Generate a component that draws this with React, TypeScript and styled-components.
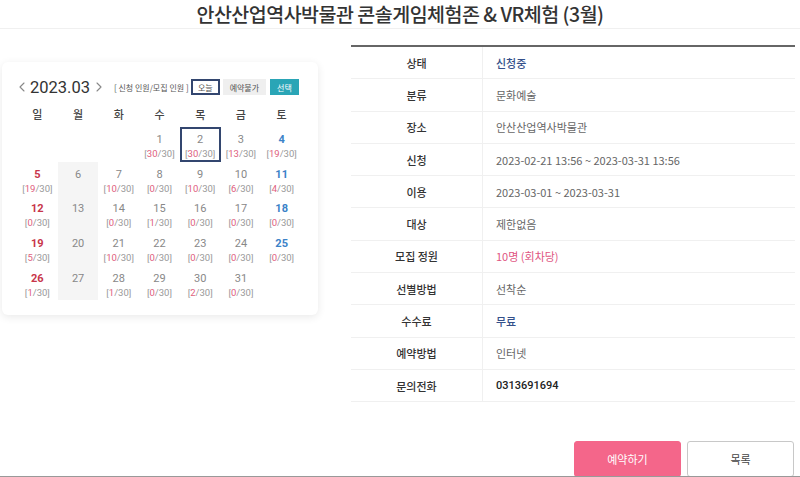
import React from "react";
import styled, { createGlobalStyle } from "styled-components";
import { ChevronLeft, ChevronRight } from "lucide-react";

const GlobalStyle = createGlobalStyle`
  body {
    margin: 0;
    background: #fff;
    font-family: "Noto Sans CJK KR", "Noto Sans", Roboto, sans-serif;
    color: #333;
  }
`;

const Page = styled.div`
  width: 800px;
  height: 477px;
  overflow: hidden;
  display: flex;
  flex-direction: column;
`;

const Title = styled.h1`
  margin: 0;
  height: 29px;
  border-bottom: 1px solid #f0f0f0;
  box-sizing: border-box;
  font-size: 19.5px;
  font-weight: 500;
  line-height: 28px;
  text-align: center;
  color: #333;
  letter-spacing: -0.5px;
`;

const Main = styled.div`
  display: flex;
  align-items: flex-start;
`;

const Card = styled.div`
  margin: 33px 0 0 2px;
  width: 316px;
  box-sizing: border-box;
  padding: 14px 16px 15px 15px;
  background: #fff;
  border-radius: 6px;
  box-shadow: 0 2px 8px rgba(0, 0, 0, 0.09);
`;

const CalHeader = styled.div`
  display: flex;
  align-items: center;
  height: 22px;
  margin-bottom: 3px;
`;

const NavButton = styled.span`
  display: inline-flex;
  align-items: center;
  color: #888;
  margin: 0 -3px;
`;

const Month = styled.span`
  font-family: Roboto, "Noto Sans", sans-serif;
  font-size: 16.5px;
  color: #333;
  margin: 0 4px 0 3px;
`;

const Legend = styled.span`
  font-size: 8px;
  color: #555;
  margin-left: 10px;
  margin-right: 2px;
  white-space: nowrap;
`;

const Chip = styled.span<{ $kind: "today" | "closed" | "selected" }>`
  display: inline-flex;
  align-items: center;
  justify-content: center;
  height: 16px;
  box-sizing: border-box;
  font-size: 8px;
  white-space: nowrap;
  color: ${({ $kind }) => ($kind === "selected" ? "#fff" : "#555")};
  background: ${({ $kind }) =>
    $kind === "closed" ? "#efefef" : $kind === "selected" ? "#2aa5b6" : "#fff"};
  border: ${({ $kind }) => ($kind === "today" ? "2px solid #33466f" : "none")};
  width: ${({ $kind }) => ($kind === "closed" ? "44px" : "30px")};
  margin-right: ${({ $kind }) => ($kind === "closed" ? "4px" : "3px")};
`;

const Grid = styled.div`
  display: grid;
  grid-template-columns: repeat(7, 1fr);
  width: 285px;
`;

const WeekDay = styled.div`
  height: 26px;
  line-height: 26px;
  text-align: center;
  font-size: 11px;
  color: #444;
  font-weight: 500;
`;

const Cell = styled.div<{ $closed?: boolean; $today?: boolean }>`
  height: 34.7px;
  box-sizing: border-box;
  padding-top: ${({ $today }) => ($today ? "4px" : "6px")};
  text-align: center;
  background: ${({ $closed }) => ($closed ? "#f5f5f5" : "transparent")};
  border: ${({ $today }) => ($today ? "2px solid #33466f" : "none")};
`;

const DayNum = styled.div<{ $tone: "sun" | "sat" | "normal" }>`
  font-family: Roboto, "Noto Sans", sans-serif;
  font-size: 11px;
  line-height: 14px;
  font-weight: ${({ $tone }) => ($tone === "normal" ? 400 : 700)};
  color: ${({ $tone }) =>
    $tone === "sun" ? "#c8364a" : $tone === "sat" ? "#3b82c8" : "#888"};
`;

const Count = styled.div`
  font-family: Roboto, "Noto Sans", sans-serif;
  font-size: 9.5px;
  line-height: 14px;
  color: #999;
`;

const Applied = styled.span`
  color: #e0607e;
`;

const Right = styled.div`
  margin: 16px 0 0 33px;
  width: 444px;
  display: flex;
  flex-direction: column;
`;

const Table = styled.div`
  border-top: 2px solid #666;
`;

const Row = styled.div`
  display: grid;
  grid-template-columns: 132px 1fr;
  height: 32.3px;
  border-bottom: 1px solid #f0f0f0;
  box-sizing: border-box;
  font-size: 11px;
  align-items: center;
`;

const Label = styled.div`
  height: 100%;
  display: flex;
  align-items: center;
  justify-content: center;
  border-right: 1px solid #f0f0f0;
  color: #333;
  font-weight: 500;
`;

const Value = styled.div<{ $tone?: "navy" | "pink" | "bold" }>`
  padding-left: 13px;
  color: ${({ $tone }) =>
    $tone === "navy" ? "#34508a" : $tone === "pink" ? "#e05582" : $tone === "bold" ? "#222" : "#666"};
  font-weight: ${({ $tone }) => ($tone === "bold" || $tone === "navy" ? 500 : 400)};
  font-family: ${({ $tone }) =>
    $tone === "bold" ? "Roboto, 'Noto Sans', sans-serif" : "inherit"};
`;

const Actions = styled.div`
  display: flex;
  justify-content: flex-end;
  gap: 6px;
  margin-top: 39px;
  margin-right: 1px;
`;

const Button = styled.button<{ $primary?: boolean }>`
  width: 107px;
  height: 36px;
  border-radius: 3px;
  font-family: inherit;
  font-size: 11px;
  cursor: pointer;
  color: ${({ $primary }) => ($primary ? "#fff" : "#444")};
  background: ${({ $primary }) => ($primary ? "#f4668a" : "#fff")};
  border: 1px solid ${({ $primary }) => ($primary ? "#f4668a" : "#c8c8c8")};
`;

const BottomLine = styled.div`
  position: absolute;
  left: 0;
  right: 0;
  top: 476px;
  height: 1px;
  background: #999;
`;

type Day = { d: number; n?: number; closed?: boolean; today?: boolean } | null;

const weeks: Day[][] = [
  [null, null, null, { d: 1, n: 30 }, { d: 2, n: 30, today: true }, { d: 3, n: 13 }, { d: 4, n: 19 }],
  [{ d: 5, n: 19 }, { d: 6, closed: true }, { d: 7, n: 10 }, { d: 8, n: 0 }, { d: 9, n: 10 }, { d: 10, n: 6 }, { d: 11, n: 4 }],
  [{ d: 12, n: 0 }, { d: 13, closed: true }, { d: 14, n: 0 }, { d: 15, n: 1 }, { d: 16, n: 0 }, { d: 17, n: 0 }, { d: 18, n: 0 }],
  [{ d: 19, n: 5 }, { d: 20, closed: true }, { d: 21, n: 10 }, { d: 22, n: 0 }, { d: 23, n: 0 }, { d: 24, n: 0 }, { d: 25, n: 0 }],
  [{ d: 26, n: 1 }, { d: 27, closed: true }, { d: 28, n: 1 }, { d: 29, n: 0 }, { d: 30, n: 2 }, { d: 31, n: 0 }, null],
];

const weekDays = ["일", "월", "화", "수", "목", "금", "토"];

const info: { label: string; value: string; tone?: "navy" | "pink" | "bold" }[] = [
  { label: "상태", value: "신청중", tone: "navy" },
  { label: "분류", value: "문화예술" },
  { label: "장소", value: "안산산업역사박물관" },
  { label: "신청", value: "2023-02-21 13:56 ~ 2023-03-31 13:56" },
  { label: "이용", value: "2023-03-01 ~ 2023-03-31" },
  { label: "대상", value: "제한없음" },
  { label: "모집 정원", value: "10명 (회차당)", tone: "pink" },
  { label: "선별방법", value: "선착순" },
  { label: "수수료", value: "무료", tone: "navy" },
  { label: "예약방법", value: "인터넷" },
  { label: "문의전화", value: "0313691694", tone: "bold" },
];

const App: React.FC = () => {
  return (
    <Page>
      <GlobalStyle />
      <Title>안산산업역사박물관 콘솔게임체험존 &amp; VR체험 (3월)</Title>
      <Main>
        <Card>
          <CalHeader>
            <NavButton>
              <ChevronLeft size={16} strokeWidth={1.6} />
            </NavButton>
            <Month>2023.03</Month>
            <NavButton>
              <ChevronRight size={16} strokeWidth={1.6} />
            </NavButton>
            <Legend>[ 신청 인원/모집 인원 ]</Legend>
            <Chip $kind="today">오늘</Chip>
            <Chip $kind="closed">예약불가</Chip>
            <Chip $kind="selected">선택</Chip>
          </CalHeader>
          <Grid>
            {weekDays.map((w) => (
              <WeekDay key={w}>{w}</WeekDay>
            ))}
            {weeks.flat().map((day, i) => {
              if (!day) return <Cell key={i} />;
              const col = i % 7;
              const tone = col === 0 ? "sun" : col === 6 ? "sat" : "normal";
              return (
                <Cell key={i} $closed={day.closed} $today={day.today}>
                  <DayNum $tone={tone}>{day.d}</DayNum>
                  {day.n !== undefined && (
                    <Count>
                      [<Applied>{day.n}</Applied>/30]
                    </Count>
                  )}
                </Cell>
              );
            })}
          </Grid>
        </Card>
        <Right>
          <Table>
            {info.map((r) => (
              <Row key={r.label}>
                <Label>{r.label}</Label>
                <Value $tone={r.tone}>{r.value}</Value>
              </Row>
            ))}
          </Table>
          <Actions>
            <Button $primary>예약하기</Button>
            <Button>목록</Button>
          </Actions>
        </Right>
      </Main>
      <BottomLine />
    </Page>
  );
};

export default App;
